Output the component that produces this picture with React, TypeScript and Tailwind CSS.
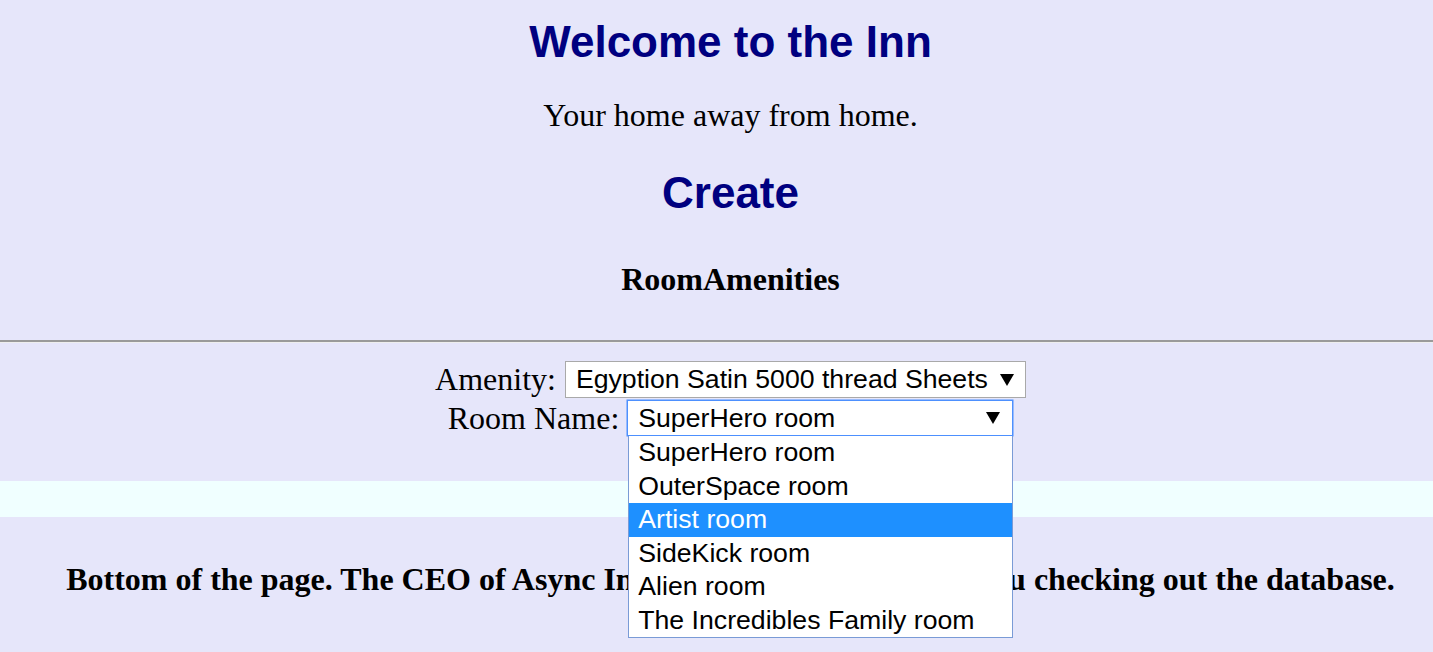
import { useState } from "react";

const rooms = [
  "SuperHero room",
  "OuterSpace room",
  "Artist room",
  "SideKick room",
  "Alien room",
  "The Incredibles Family room",
];

function Arrow() {
  return (
    <svg width="14" height="12" viewBox="0 0 14 12" className="shrink-0">
      <polygon points="0,0 14,0 7,12" fill="#000" />
    </svg>
  );
}

export default function App() {
  const [hovered] = useState(2);

  return (
    <div className="min-h-screen bg-[#e6e6fa] font-['Liberation_Serif',serif] text-black">
      {/* Header */}
      <div className="pl-[28px] text-center">
        <h1 className="pt-[17px] font-['Liberation_Sans',Arial,sans-serif] text-[44px] font-bold leading-[50px] text-[#000080]">
          Welcome to the Inn
        </h1>
        <p className="mt-[30px] text-[32px] leading-[36px]">Your home away from home.</p>
        <h2 className="mt-[35px] font-['Liberation_Sans',Arial,sans-serif] text-[44px] font-bold leading-[50px] text-[#000080]">
          Create
        </h2>
        <h4 className="mt-[43px] text-[32px] font-bold leading-[36px]">RoomAmenities</h4>
      </div>

      <hr className="mt-[43px] border-0 border-t-2 border-b border-t-[#9a9a9a] border-b-[#eeeeee]" />

      {/* Form */}
      <div className="pl-[28px] pt-[18px]">
        <div className="flex items-start justify-center">
          <label className="mr-[9px] mt-[2px] text-[32px] leading-[32px]">Amenity:</label>
          <div className="flex h-[37px] w-[461px] items-center justify-between border border-[#a9a9a9] bg-white pl-[10px] pr-[11px] font-['Liberation_Sans',Arial,sans-serif] text-[26.67px] leading-[35px]">
            <span className="-mt-[1px]">Egyption Satin 5000 thread Sheets</span>
            <Arrow />
          </div>
        </div>
        <div className="mt-[2px] flex items-start justify-center">
          <label className="mr-[8px] mt-[2px] text-[32px] leading-[32px]">Room Name:</label>
          <div className="relative">
            <div className="flex h-[36px] w-[386px] items-center justify-between border border-[#4d90fe] bg-white pl-[10px] pr-[12px] font-['Liberation_Sans',Arial,sans-serif] text-[26.67px] leading-[34px] shadow-[0_0_0_0.5px_#4d90fe]">
              <span>SuperHero room</span>
              <Arrow />
            </div>
            {/* open dropdown list */}
            <ul className="absolute left-[1px] top-full z-10 w-[385px] border border-t-0 border-[#7a9bd6] bg-white font-['Liberation_Sans',Arial,sans-serif] text-[26.67px]">
              {rooms.map((r, i) => (
                <li
                  key={r}
                  className={`h-[33.5px] pl-[9px] leading-[32px] ${
                    i === hovered ? "bg-[#1e90ff] text-white" : "text-black"
                  }`}
                >
                  {r}
                </li>
              ))}
            </ul>
          </div>
        </div>
      </div>

      {/* Band */}
      <div className="mt-[45px] h-[36px] bg-[#f0ffff]" />

      {/* Footer */}
      <div className="pl-[28px] pt-[44px] text-center">
        <h4 className="text-[32px] font-bold leading-[36px]">
          Bottom of the page. The CEO of Async Inn very much appreciates you checking out the database.
        </h4>
      </div>
    </div>
  );
}
